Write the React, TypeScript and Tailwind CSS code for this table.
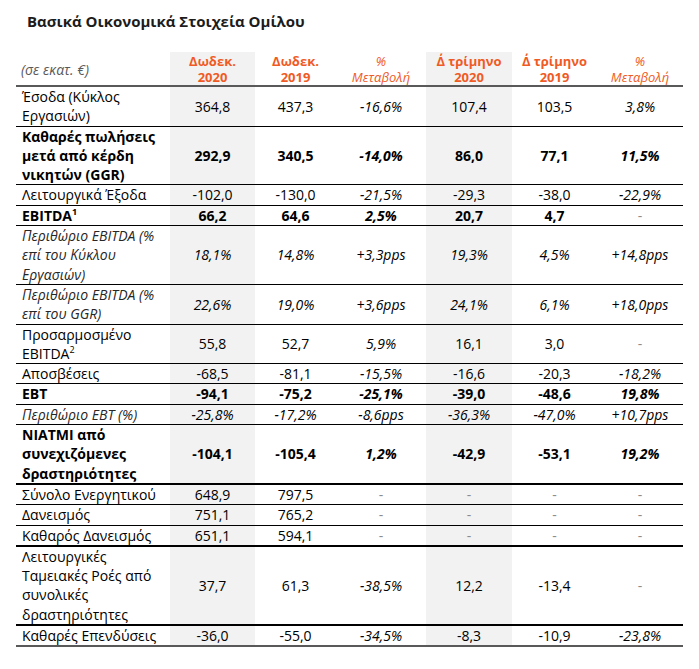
import React from "react";

type Row = {
  label: React.ReactNode;
  vals: string[];
  bold?: boolean;
  italic?: boolean;
  border: "n" | "t" | "b";
};

const Sup = ({ n }: { n: string }) => (
  <span className="text-[9px] relative -top-[6px] leading-none">{n}</span>
);

const rows: Row[] = [
  { label: <>Έσοδα (Κύκλος<br />Εργασιών)</>, vals: ["364,8", "437,3", "-16,6%", "107,4", "103,5", "3,8%"], border: "n" },
  { label: <>Καθαρές πωλήσεις<br />μετά από κέρδη<br />νικητών (GGR)</>, vals: ["292,9", "340,5", "-14,0%", "86,0", "77,1", "11,5%"], bold: true, border: "n" },
  { label: <>Λειτουργικά Έξοδα</>, vals: ["-102,0", "-130,0", "-21,5%", "-29,3", "-38,0", "-22,9%"], border: "n" },
  { label: <>EBITDA<Sup n="1" /></>, vals: ["66,2", "64,6", "2,5%", "20,7", "4,7", "-"], bold: true, border: "n" },
  { label: <>Περιθώριο EBITDA (%<br />επί του Κύκλου<br />Εργασιών)</>, vals: ["18,1%", "14,8%", "+3,3pps", "19,3%", "4,5%", "+14,8pps"], italic: true, border: "n" },
  { label: <>Περιθώριο EBITDA (%<br />επί του GGR)</>, vals: ["22,6%", "19,0%", "+3,6pps", "24,1%", "6,1%", "+18,0pps"], italic: true, border: "n" },
  { label: <>Προσαρμοσμένο<br />EBITDA<Sup n="2" /></>, vals: ["55,8", "52,7", "5,9%", "16,1", "3,0", "-"], border: "n" },
  { label: <>Αποσβέσεις</>, vals: ["-68,5", "-81,1", "-15,5%", "-16,6", "-20,3", "-18,2%"], border: "n" },
  { label: <>EBT</>, vals: ["-94,1", "-75,2", "-25,1%", "-39,0", "-48,6", "19,8%"], bold: true, border: "n" },
  { label: <>Περιθώριο EBT (%)</>, vals: ["-25,8%", "-17,2%", "-8,6pps", "-36,3%", "-47,0%", "+10,7pps"], italic: true, border: "n" },
  { label: <>NIATMI από<br />συνεχιζόμενες<br />δραστηριότητες</>, vals: ["-104,1", "-105,4", "1,2%", "-42,9", "-53,1", "19,2%"], bold: true, border: "t" },
  { label: <>Σύνολο Ενεργητικού</>, vals: ["648,9", "797,5", "-", "-", "-", "-"], border: "n" },
  { label: <>Δανεισμός</>, vals: ["751,1", "765,2", "-", "-", "-", "-"], border: "n" },
  { label: <>Καθαρός Δανεισμός</>, vals: ["651,1", "594,1", "-", "-", "-", "-"], border: "t" },
  { label: <>Λειτουργικές<br />Ταμειακές Ροές από<br />συνολικές<br />δραστηριότητες</>, vals: ["37,7", "61,3", "-38,5%", "12,2", "-13,4", "-"], border: "t" },
  { label: <>Καθαρές Επενδύσεις</>, vals: ["-36,0", "-55,0", "-34,5%", "-8,3", "-10,9", "-23,8%"], border: "b" },
];

const widths = ["w-[85px]", "w-[81px]", "w-[90px]", "w-[86px]", "w-[85px]", "w-[86px]"];
const shaded = [true, false, false, true, false, false];
const pctCol = [false, false, true, false, false, true];

export default function App() {
  return (
    <div
      className="w-[699px] h-[669px] bg-white text-black"
      style={{ fontFamily: '"Open Sans", "Noto Sans", sans-serif' }}
    >
      <div className="pl-[27px] pt-[11px] h-[52px] text-[15px] font-bold text-[#1c1c1c] leading-[20px]">
        Βασικά Οικονομικά Στοιχεία Ομίλου
      </div>
      <div className="ml-[16px] w-[667px]">
        {/* header */}
        <div className="flex h-[35px] border-b-2 border-[#595959]">
          <div className="w-[154px] pl-[5px] flex items-center text-[14px] italic text-[#595959] pt-[2px]">
            (σε εκατ. €)
          </div>
          {[
            ["Δωδεκ.", "2020"],
            ["Δωδεκ.", "2019"],
            ["%", "Μεταβολή"],
            ["Δ΄ τρίμηνο", "2020"],
            ["Δ΄ τρίμηνο", "2019"],
            ["%", "Μεταβολή"],
          ].map((h, i) => (
            <div
              key={i}
              className={`${widths[i]} flex flex-col items-center justify-center text-[13px] leading-[16px] pt-[1px] text-[#f05a24] ${
                shaded[i] ? "bg-[#f2f2f2]" : ""
              } ${pctCol[i] ? "italic font-normal" : "font-bold"}`}
            >
              <span>{h[0]}</span>
              <span>{h[1]}</span>
            </div>
          ))}
        </div>
        {rows.map((r, ri) => (
          <div
            key={ri}
            className={`flex text-[14px] leading-[19.3px] ${
              r.border === "n"
                ? "border-b border-black"
                : r.border === "t"
                ? "border-b-2 border-black"
                : "border-b-2 border-[#595959]"
            } ${r.bold ? "font-bold" : ""}`}
          >
            <div className={`w-[154px] pl-[6px] ${r.italic ? "italic text-[#262626]" : ""}`}>{r.label}</div>
            {r.vals.map((v, i) => (
              <div
                key={i}
                className={`${widths[i]} flex items-center justify-center ${shaded[i] ? "bg-[#f2f2f2]" : ""} ${
                  r.italic || pctCol[i] ? "italic" : ""
                } ${v === "-" ? "text-[#8c8c8c] font-normal not-italic" : ""}`}
              >
                {v}
              </div>
            ))}
          </div>
        ))}
      </div>
    </div>
  );
}
